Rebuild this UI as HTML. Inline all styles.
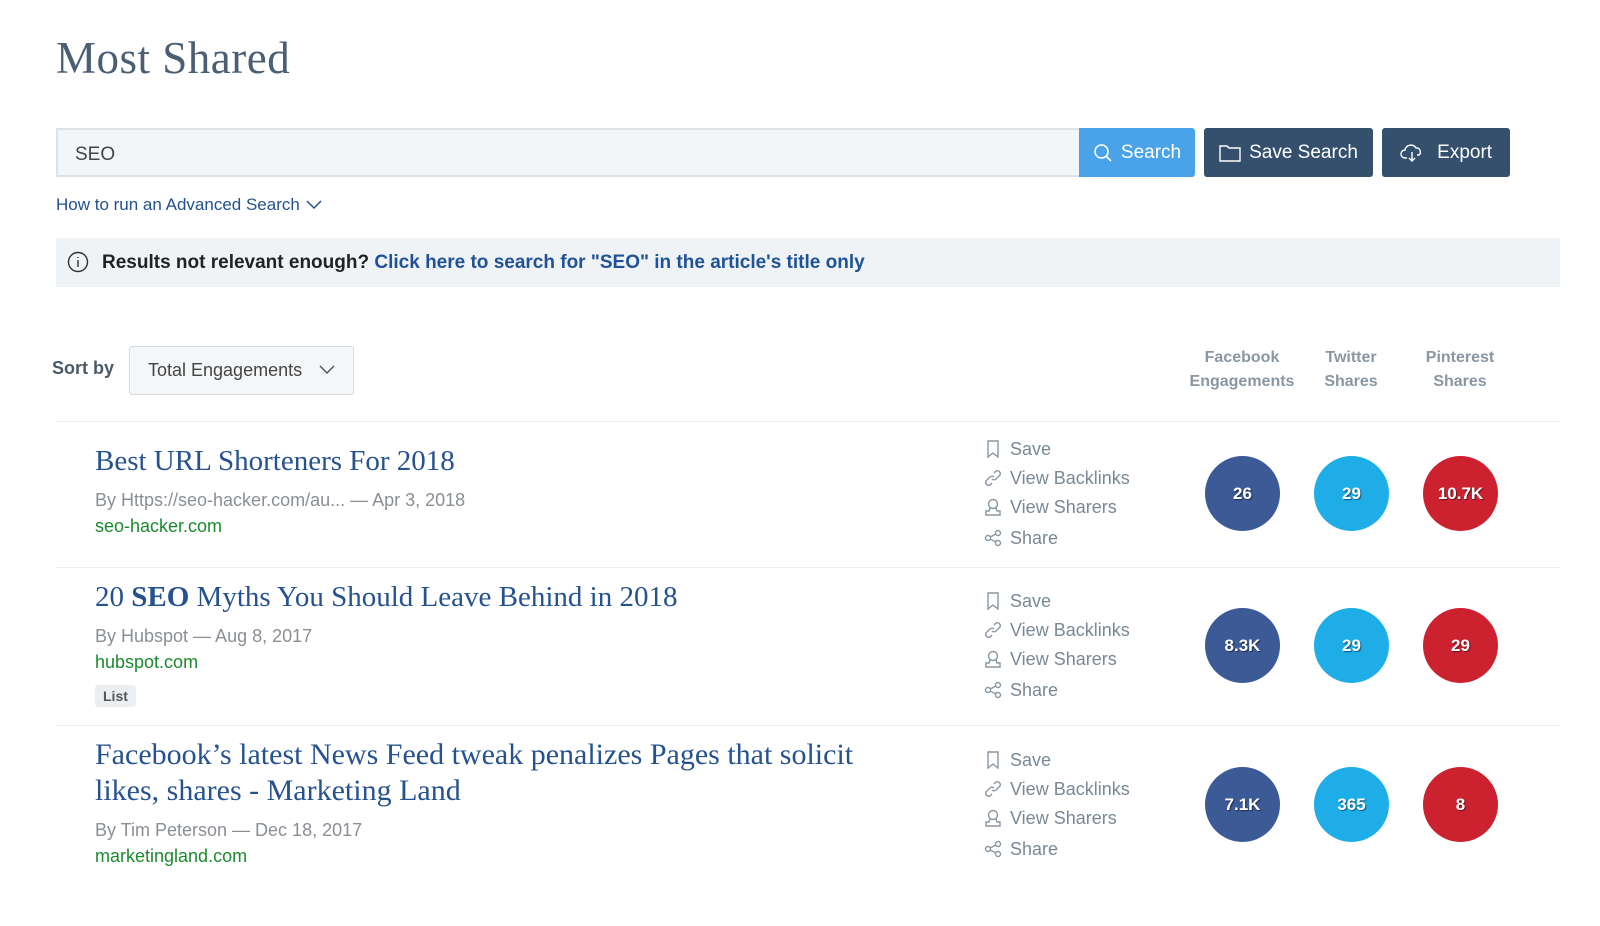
<!DOCTYPE html>
<html><head><meta charset="utf-8"><style>
*{margin:0;padding:0;box-sizing:border-box}
body{width:1600px;height:926px;background:#fff;font-family:"Liberation Sans",sans-serif;position:relative;overflow:hidden}
.a{position:absolute}
h1{position:absolute;left:56px;top:32px;font:400 45px "Liberation Serif",serif;color:#4a5f74;letter-spacing:0.5px}
.inp{left:56px;top:128px;width:1024px;height:49px;background:#f2f6f8;border:2px solid #dde2e6;border-right:none;font-size:19px;color:#444;padding:14px 0 0 17px}
.btn{top:128px;height:49px;color:#fff;font-size:19px;display:flex;align-items:center;justify-content:center;gap:8px;border-radius:3px}
.adv{left:56px;top:195px;color:#23528c;font-size:17px}
.bar{left:56px;top:238px;width:1504px;height:49px;background:#eff3f6;font-size:19px;font-weight:bold;color:#222;padding:14px 0 0 46px}
.bar b{color:#1f5296}
.sort{left:52px;top:358px;font-size:18px;font-weight:bold;color:#4a5a68}
.sel{left:129px;top:346px;width:225px;height:49px;border:1px solid #d5dade;border-radius:3px;background:#f4f6f8;font-size:18px;color:#444;padding:13px 0 0 18px}
.hd{top:346px;width:120px;text-align:center;font-size:16px;font-weight:bold;color:#8a96a2;line-height:24px}
.sep{left:56px;width:1504px;height:1px;background:#eceff1}
.t{left:95px;font:400 29px/36px "Liberation Serif",serif;color:#26528f;white-space:nowrap}
.m{left:95px;font-size:18px;color:#8a8f95}
.g{left:95px;font-size:18px;color:#1b8a2e}
.act{left:984px;font-size:18px;color:#7a8896;line-height:28px}
.act div{display:flex;align-items:center;gap:8px;height:29px}
.act svg{width:18px;height:18px;stroke:#8a96a2;fill:none;stroke-width:1.4}
.c{width:75px;height:75px;border-radius:50%;color:#fff;font-weight:bold;font-size:17px;display:flex;align-items:center;justify-content:center;text-shadow:1px 1px 1px rgba(0,0,0,.5)}
.fb{background:#3c5a96;left:1205px}.tw{background:#1fade8;left:1314px}.pi{background:#cc2230;left:1423px}
</style></head><body>
<h1>Most Shared</h1>
<div class="a inp">SEO</div>
<div class="a btn" style="left:1079px;width:116px;background:#4aa3e8;border-radius:0 3px 3px 0"><svg width="20" height="20" viewBox="0 0 20 20" fill="none" stroke="#fff" stroke-width="1.6"><circle cx="8.5" cy="8.5" r="6.5"/><path d="M13 13l5 5"/></svg>Search</div>
<div class="a btn" style="left:1204px;width:169px;background:#34506c"><svg width="22" height="18" viewBox="0 0 22 18" fill="none" stroke="#fff" stroke-width="1.4"><path d="M1 2h7l2 2h11v13H1z"/></svg>Save Search</div>
<div class="a btn" style="left:1382px;width:128px;background:#34506c"><svg width="24" height="20" viewBox="0 0 24 20" fill="none" stroke="#fff" stroke-width="1.4"><path d="M7 15H5a4 4 0 010-8 6 6 0 0111-2 4 4 0 013 7h-2"/><path d="M12 9v9M9 15l3 3 3-3"/></svg>&nbsp;Export</div>
<div class="a adv">How to run an Advanced Search <svg width="18" height="12" viewBox="0 0 18 12" fill="none" stroke="#23528c" stroke-width="1.5"><path d="M2 3l7 7 7-7"/></svg></div>
<div class="a bar"><svg class="a" style="left:11px;top:13px" width="22" height="22" viewBox="0 0 22 22" fill="none" stroke="#333" stroke-width="1.4"><circle cx="11" cy="11" r="9.5"/><path d="M11 9v7M11 6v1"/></svg>Results not relevant enough? <b>Click here to search for "SEO" in the article's title only</b></div>
<div class="a sort">Sort by</div>
<div class="a sel">Total Engagements <svg style="position:absolute;left:188px;top:17px" width="18" height="12" viewBox="0 0 18 12" fill="none" stroke="#555" stroke-width="1.5"><path d="M2 2l7 7 7-7"/></svg></div>
<div class="a hd" style="left:1182px">Facebook Engagements</div>
<div class="a hd" style="left:1291px">Twitter<br>Shares</div>
<div class="a hd" style="left:1400px">Pinterest Shares</div>

<div class="a sep" style="top:421px"></div>
<div class="a sep" style="top:567px"></div>
<div class="a sep" style="top:725px"></div>

<div class="a t" style="top:443px">Best URL Shorteners For 2018</div>
<div class="a m" style="top:490px">By Https://seo-hacker.com/au... — Apr 3, 2018</div>
<div class="a g" style="top:516px">seo-hacker.com</div>

<div class="a t" style="top:579px">20 <b>SEO</b> Myths You Should Leave Behind in 2018</div>
<div class="a m" style="top:626px">By Hubspot — Aug 8, 2017</div>
<div class="a g" style="top:652px">hubspot.com</div>
<div class="a" style="left:95px;top:685px;background:#eceff1;color:#555;font-size:14px;font-weight:bold;padding:3px 8px;border-radius:3px">List</div>

<div class="a t" style="top:737px;font-size:30px">Facebook’s latest News Feed tweak penalizes Pages that solicit<br>likes, shares - Marketing Land</div>
<div class="a m" style="top:820px">By Tim Peterson — Dec 18, 2017</div>
<div class="a g" style="top:846px">marketingland.com</div>

<div class="a act" style="top:434px">
<div><svg viewBox="0 0 18 18"><path d="M4 1h10v16l-5-4-5 4z"/></svg>Save</div>
<div><svg viewBox="0 0 18 18"><path d="M8 10a3 3 0 004 0l4-4a3 3 0 00-4-4l-2 2M10 8a3 3 0 00-4 0l-4 4a3 3 0 004 4l2-2"/></svg>View Backlinks</div>
<div><svg viewBox="0 0 18 18"><circle cx="9" cy="6" r="4.5"/><path d="M6 10l-1 3H2v4h14v-4h-3l-1-3"/></svg>View Sharers</div>
<div style="margin-top:2px"><svg viewBox="0 0 18 18"><circle cx="4" cy="9" r="2.5"/><circle cx="14" cy="4" r="2.5"/><circle cx="14" cy="14" r="2.5"/><path d="M6 8l6-3M6 10l6 3"/></svg>Share</div>
</div>
<div class="a act" style="top:586px">
<div><svg viewBox="0 0 18 18"><path d="M4 1h10v16l-5-4-5 4z"/></svg>Save</div>
<div><svg viewBox="0 0 18 18"><path d="M8 10a3 3 0 004 0l4-4a3 3 0 00-4-4l-2 2M10 8a3 3 0 00-4 0l-4 4a3 3 0 004 4l2-2"/></svg>View Backlinks</div>
<div><svg viewBox="0 0 18 18"><circle cx="9" cy="6" r="4.5"/><path d="M6 10l-1 3H2v4h14v-4h-3l-1-3"/></svg>View Sharers</div>
<div style="margin-top:2px"><svg viewBox="0 0 18 18"><circle cx="4" cy="9" r="2.5"/><circle cx="14" cy="4" r="2.5"/><circle cx="14" cy="14" r="2.5"/><path d="M6 8l6-3M6 10l6 3"/></svg>Share</div>
</div>
<div class="a act" style="top:745px">
<div><svg viewBox="0 0 18 18"><path d="M4 1h10v16l-5-4-5 4z"/></svg>Save</div>
<div><svg viewBox="0 0 18 18"><path d="M8 10a3 3 0 004 0l4-4a3 3 0 00-4-4l-2 2M10 8a3 3 0 00-4 0l-4 4a3 3 0 004 4l2-2"/></svg>View Backlinks</div>
<div><svg viewBox="0 0 18 18"><circle cx="9" cy="6" r="4.5"/><path d="M6 10l-1 3H2v4h14v-4h-3l-1-3"/></svg>View Sharers</div>
<div style="margin-top:2px"><svg viewBox="0 0 18 18"><circle cx="4" cy="9" r="2.5"/><circle cx="14" cy="4" r="2.5"/><circle cx="14" cy="14" r="2.5"/><path d="M6 8l6-3M6 10l6 3"/></svg>Share</div>
</div>

<div class="a c fb" style="top:456px">26</div><div class="a c tw" style="top:456px">29</div><div class="a c pi" style="top:456px">10.7K</div>
<div class="a c fb" style="top:608px">8.3K</div><div class="a c tw" style="top:608px">29</div><div class="a c pi" style="top:608px">29</div>
<div class="a c fb" style="top:767px">7.1K</div><div class="a c tw" style="top:767px">365</div><div class="a c pi" style="top:767px">8</div>
</body></html>
